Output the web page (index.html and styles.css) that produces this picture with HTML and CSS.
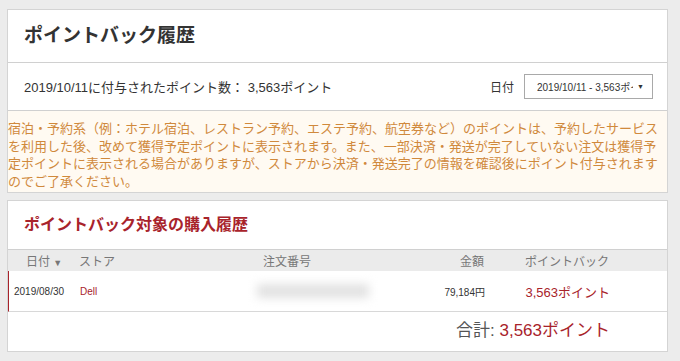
FILE: index.html
```html
<!DOCTYPE html>
<html lang="ja">
<head>
    <meta charset="UTF-8">
    <title>ポイントバック履歴</title>
    <link rel="stylesheet" href="styles.css">
</head>
<body>
    <div class="card">
        <h1 class="card-title">ポイントバック履歴</h1>
        <div class="info-row">
            <p class="info-text">2019/10/11に付与されたポイント数： 3,563ポイント</p>
            <div class="date-pick">
                <span class="date-label">日付</span>
                <div class="date-select">
                    <span class="date-value">2019/10/11 - 3,563ポイント</span>
                    <span class="date-arrow">▼</span>
                </div>
            </div>
        </div>
        <p class="notice">宿泊・予約系（例：ホテル宿泊、レストラン予約、エステ予約、航空券など）のポイントは、予約したサービスを利用した後、改めて獲得予定ポイントに表示されます。また、一部決済・発送が完了していない注文は獲得予定ポイントに表示される場合がありますが、ストアから決済・発送完了の情報を確認後にポイント付与されますのでご了承ください。</p>
    </div>

    <div class="card">
        <h2 class="card-title red">ポイントバック対象の購入履歴</h2>
        <div class="table">
            <div class="thead">
                <span class="c-date">日付 <i class="sort">▼</i></span>
                <span class="c-store">ストア</span>
                <span class="c-order">注文番号</span>
                <span class="c-amount">金額</span>
                <span class="c-point">ポイントバック</span>
            </div>
            <div class="trow">
                <span class="c-date">2019/08/30</span>
                <span class="c-store red">Dell</span>
                <span class="c-order"><span class="blurred"></span></span>
                <span class="c-amount">79,184円</span>
                <span class="c-point red">3,563ポイント</span>
            </div>
        </div>
        <div class="total">合計: <span class="red">3,563ポイント</span></div>
    </div>
</body>
</html>
```

FILE: styles.css
```css
* {
    margin: 0;
    padding: 0;
    box-sizing: border-box;
}
body {
    background: #ececec;
    padding: 9px 12px 0 7px;
    font-family: "Liberation Sans", "Noto Sans CJK JP", sans-serif;
    color: #333333;
}
.card {
    width: 661px;
    background: #ffffff;
    border: 1px solid #d4d4d4;
    margin-bottom: 7px;
}
.red {
    color: #a8232b;
}
.card-title {
    font-size: 19px;
    font-weight: bold;
    height: 53px;
    line-height: 52px;
    padding-left: 16px;
    border-bottom: 1px solid #d0d0d0;
}
h2.card-title {
    font-size: 16px;
    height: 49px;
    line-height: 48px;
}

.info-row {
    display: flex;
    align-items: center;
    justify-content: space-between;
    height: 48px;
    padding: 0 14px 0 16px;
    border-bottom: 1px solid #d0d0d0;
}
.info-text {
    font-size: 13px;
}
.date-pick {
    display: flex;
    align-items: center;
    gap: 10px;
}
.date-label {
    font-size: 12px;
}
.date-select {
    display: flex;
    align-items: center;
    gap: 4px;
    width: 129px;
    height: 25px;
    border: 1px solid #a9a9a9;
    padding: 0 8px 0 12px;
}
.date-value {
    font-size: 10px;
    white-space: nowrap;
    overflow: hidden;
    flex: 1;
}
.date-arrow {
    font-size: 7px;
}

.notice {
    background: #fffaf2;
    color: #d0893c;
    font-size: 13px;
    line-height: 17.5px;
    padding: 9px 6px 2px 0;
}

.thead, .trow {
    display: grid;
    grid-template-columns: 64px 178px 154px 80px 125px;
    align-items: center;
}
.thead {
    height: 21px;
    background: #ebebeb;
    color: #777777;
    font-size: 12px;
}
.thead .c-date {
    padding-left: 18px;
}
.thead .c-order {
    padding-left: 13px;
}
.sort {
    font-style: normal;
    font-size: 9px;
}
.trow {
    height: 41px;
    font-size: 10px;
    border-left: 1px solid #a8232b;
    border-bottom: 1px solid #d8d8d8;
}
.trow .c-date {
    padding-left: 5px;
}
.c-store {
    padding-left: 7px;
}
.c-amount, .c-point {
    text-align: right;
}
.trow .c-point {
    font-size: 13px;
}
.blurred {
    display: block;
    width: 112px;
    height: 14px;
    margin-left: 6px;
    background: #e2e2e2;
    filter: blur(5px);
}
.total {
    height: 39px;
    line-height: 38px;
    text-align: right;
    padding-right: 57px;
    font-size: 17px;
    color: #555555;
}
```
